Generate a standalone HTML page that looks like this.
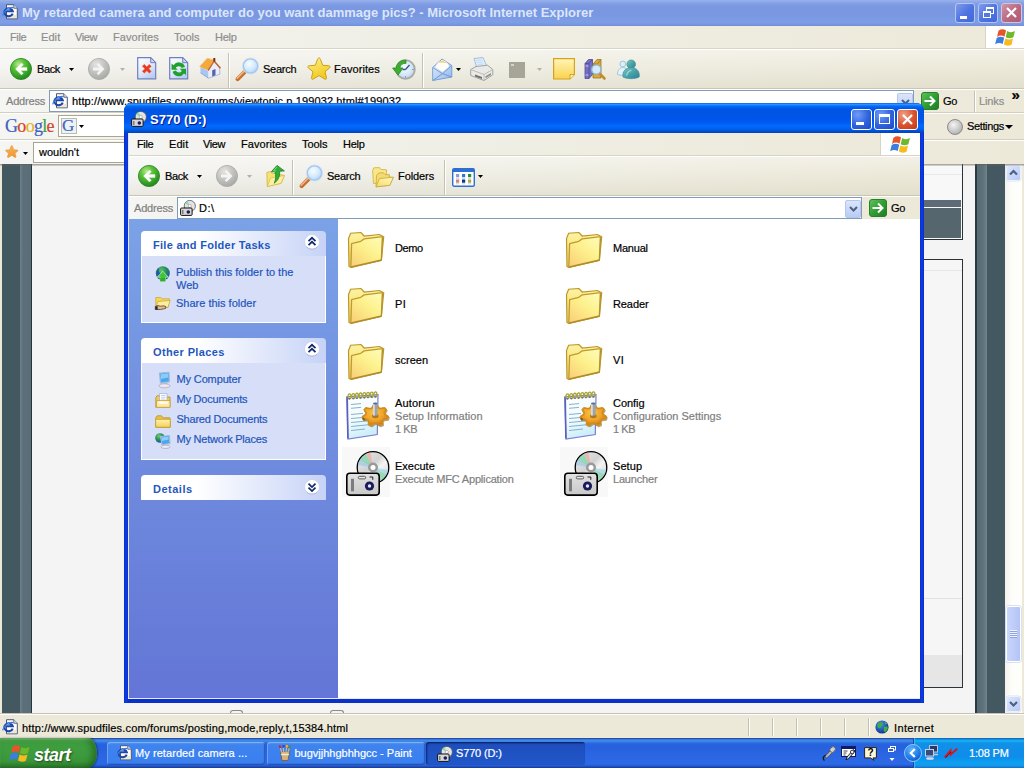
<!DOCTYPE html>
<html lang="en">
<head>
<meta charset="utf-8">
<title>S770 (D:)</title>
<style>
*{box-sizing:border-box;margin:0;padding:0}
html,body{width:1024px;height:768px;overflow:hidden;background:#ece9d8}
body{position:relative;font-family:"Liberation Sans","DejaVu Sans",sans-serif;font-size:11px;color:#000;line-height:13px}
.a{position:absolute}
.t{position:absolute;white-space:nowrap;line-height:13px;height:13px;-webkit-text-stroke:.2px currentColor}
svg{position:absolute;display:block;overflow:visible}
/* ---------- IE (inactive, maximised) ---------- */
#ie-title{left:0;top:0;width:1024px;height:26px;background:linear-gradient(to bottom,#98b2ec 0,#90abe9 6%,#7f9ce4 16%,#7a97e1 30%,#7a97e1 60%,#7d9fe6 82%,#7b99e2 92%,#728cd8 100%)}
#ie-title .cap{left:22px;top:5px;font-weight:bold;font-size:13px;line-height:16px;height:16px;color:#dbe6fb;letter-spacing:0}
.cbtn{position:absolute;width:21px;height:21px;border:1px solid #fff;border-radius:3px}
#ie-menu{left:0;top:26px;width:1024px;height:23px;background:linear-gradient(to right,#f5f5f3 0,#f2f1ec 15%,#f0efe6 38%,#eeecdf 70%,#ece9d9 100%);border-bottom:1px solid #d8d5c4}
#ie-menu .t{top:5px;color:#8d8d8d}
#ie-tb{left:0;top:49px;width:1024px;height:40px;background:linear-gradient(to bottom,rgba(255,255,255,.35) 0,rgba(255,255,255,0) 45%,rgba(190,184,158,.2) 100%),linear-gradient(to right,#f5f5f3 0,#f2f1ec 15%,#f0efe6 38%,#eeecdf 70%,#ece9d9 100%);border-top:1px solid #fff;border-bottom:1px solid #c9c6b6}
#ie-addr{left:0;top:89px;width:1024px;height:24px;background:linear-gradient(to right,#f5f5f3 0,#f2f1ec 15%,#f0efe6 38%,#eeecdf 70%,#ece9d9 100%);border-top:1px solid #fff;border-bottom:1px solid #d2cfbe}
#ie-goog{left:0;top:113px;width:1024px;height:27px;background:linear-gradient(to right,#f5f5f3 0,#f2f1ec 15%,#f0efe6 38%,#eeecdf 70%,#ece9d9 100%);border-top:1px solid #fff;border-bottom:1px solid #d2cfbe}
#ie-fav{left:0;top:140px;width:1024px;height:24px;background:linear-gradient(to right,#f5f5f3 0,#f2f1ec 15%,#f0efe6 38%,#eeecdf 70%,#ece9d9 100%);border-top:1px solid #fff}
.inp{position:absolute;background:#fff;border:1px solid #7f9db9}
.sep{position:absolute;width:2px;border-left:1px solid #c5c2b2;border-right:1px solid #fff}
/* ---------- page ---------- */
#page{left:0;top:164px;width:1024px;height:550px;background:#f4f4f4;z-index:0}
#page::before{content:'';position:absolute;left:0;top:0;width:1024px;height:2px;background:linear-gradient(to bottom,rgba(90,88,76,.6),rgba(120,116,100,.2));z-index:5}
/* ---------- status ---------- */
#ie-status{left:0;top:714px;width:1024px;height:24px;background:#ece9d8;border-top:1px solid #fff}
/* ---------- taskbar ---------- */
#taskbar{left:0;top:738px;width:1024px;height:30px;background:linear-gradient(to bottom,#1f2f86 0,#3165c4 3%,#3682e5 6%,#4490e6 10%,#3883e5 12%,#2f76e4 15%,#2a69e0 18%,#2863de 20%,#2861dd 23%,#2861de 38%,#2b66e2 54%,#2c69e5 86%,#2a65e0 89%,#255cd6 92%,#1f50c2 95%,#1941a5 98%)}
#start{left:0;top:0;width:97px;height:30px;border-radius:0 9px 9px 0/0 15px 15px 0;background:linear-gradient(to bottom,#6cba6a 0,#4aa64a 7%,#3f9f3f 18%,#3d9b3d 50%,#3b963b 78%,#318531 92%,#2a742a 100%);box-shadow:inset -4px 0 7px rgba(20,80,20,.6), inset 0 2px 2px rgba(255,255,255,.2), 1px 0 2px rgba(0,0,40,.45)}
#start .t{left:34px;top:6px;font-size:18px;line-height:22px;height:22px;font-weight:bold;font-style:italic;color:#fff;text-shadow:1px 1px 2px rgba(0,0,0,.5);letter-spacing:-0.5px}
.task{position:absolute;top:4px;height:23px;border-radius:3px;background:linear-gradient(to bottom,#5c9af3 0,#3f83ee 12%,#3c81f0 50%,#3b80ef 88%,#336fd8 100%);box-shadow:inset 1px 1px 0 rgba(255,255,255,.25), inset -1px -1px 1px rgba(0,0,60,.3)}
.task.on{background:linear-gradient(to bottom,#17399f 0,#1e4ebc 10%,#1f52c3 50%,#2157c9 100%);box-shadow:inset 1px 1px 2px rgba(0,0,40,.55)}
.task .t{top:5px;color:#fff}
#tray{left:913px;top:0;width:111px;height:30px;background:linear-gradient(to bottom,#0c59b9 1%,#139ee9 6%,#18b5f2 10%,#139beb 14%,#1290e8 19%,#0d8dea 63%,#0d9ff1 81%,#0f9eed 88%,#119be9 91%,#1392e2 94%,#137ed7 97%,#095bc9 100%);border-left:1px solid #0d4fa8;box-shadow:inset 1px 0 1px #3fb6f5}
/* ---------- Explorer window (active) ---------- */
#ex{z-index:10;left:124px;top:103px;width:800px;height:600px;border-radius:8px 8px 0 0;background:linear-gradient(to right,#0a2acb 0,#0c3ee4 2px,#0a36da 3px,#0a30cc 4px,#0a30cc 796px,#0a36da 797px,#0c3ee4 798px,#0a2acb 800px)}
#ex-title{left:0;top:0;width:800px;height:30px;border-radius:8px 8px 0 0;background:linear-gradient(to bottom,#0058ee 0,#3593ff 4%,#288eff 6%,#127dff 8%,#036ffc 10%,#0262ee 14%,#0057e5 20%,#0054e3 24%,#0055eb 56%,#005bf5 66%,#026afe 76%,#0062ef 86%,#0055dc 92%,#0049c8 96%,#0a41b8 100%)}
#ex-title .cap{left:26px;top:9px;font-weight:bold;font-size:13px;line-height:16px;height:16px;color:#fff;text-shadow:1px 1px 0 #0a1883}
#ex-in{left:4px;top:30px;width:792px;height:566px;background:#fff;overflow:hidden}
#ex-menu{left:0;top:0;width:792px;height:23px;background:linear-gradient(to right,#f5f5f3 0,#f2f1ec 15%,#f0efe6 38%,#eeecdf 70%,#ece9d9 100%);border-bottom:1px solid #d8d5c4}
#ex-menu .t{top:5px}
#ex-tb{left:0;top:23px;width:792px;height:40px;background:linear-gradient(to bottom,rgba(255,255,255,.35) 0,rgba(255,255,255,0) 45%,rgba(190,184,158,.2) 100%),linear-gradient(to right,#f5f5f3 0,#f2f1ec 15%,#f0efe6 38%,#eeecdf 70%,#ece9d9 100%);border-top:1px solid #fff;border-bottom:1px solid #c9c6b6}
#ex-addr{left:0;top:63px;width:792px;height:23px;background:linear-gradient(to right,#f5f5f3 0,#f2f1ec 15%,#f0efe6 38%,#eeecdf 70%,#ece9d9 100%);border-top:1px solid #fff}
#side{left:0;top:86px;width:210px;height:480px;background:linear-gradient(to bottom,#7ba2e7 0,#6375d6 100%)}
.ph{position:absolute;left:13px;width:185px;height:25px;border-radius:4px 4px 0 0;background:linear-gradient(to right,#fff 0,#fff 30%,#c6d3f7 100%)}
.ph .t{left:12px;top:7.500px;font-weight:bold;color:#1f57c0}
.pb{position:absolute;left:13px;width:185px;background:#d6dff7;border:1px solid #fff;border-top:0}
.pb .t{color:#1f55bd}
#files{left:210px;top:86px;width:582px;height:480px;background:#fff}
#files .t.g{color:#808080}

.cap,.ph .t,#start .t{-webkit-text-stroke:0 transparent !important}

</style>
</head>
<body>

<!-- ie_top -->
<div id="ie-title" class="a">
  <svg style="left:2px;top:4px" width="16" height="16" viewBox="0 0 16 16"><path d="M4.500 .7h7.300l3.500 3.500v10.600H4.500z" fill="#fcfcf8" stroke="#4b5876" stroke-width="1"/>
<path d="M11.800 .7v3.500h3.500" fill="#e4e9f4" stroke="#4b5876" stroke-width=".9"/>
<path d="M5 11h9.800v3.300H5z" fill="#ecdfc4" opacity=".75"/>
<path d="M10.700 9.600A4.300 3.900 0 1 1 10.800 7.300H3.200" fill="none" stroke="#1d46ac" stroke-width="2.100"/>
<path d="M.7 11.300C1.800 6.500 7.500 3 11.300 3.600" fill="none" stroke="#3d7be0" stroke-width="1.300"/>
<path d="M4.300 6.300C5 5.200 6 4.800 7 4.800" fill="none" stroke="#7db4f4" stroke-width=".9"/></svg>
  <div class="t cap">My retarded camera and computer do you want dammage pics? - Microsoft Internet Explorer</div>
  <div class="cbtn" style="left:955px;top:3px;width:20px;height:20px;border-color:#b4c6f4;background:linear-gradient(135deg,#7f9bea,#4d72e2 55%,#4468d8)"><div class="a" style="left:4px;top:12px;width:7px;height:3px;background:#fff"></div></div>
  <div class="cbtn" style="left:978px;top:3px;width:20px;height:20px;border-color:#b4c6f4;background:linear-gradient(135deg,#7f9bea,#4d72e2 55%,#4468d8)">
    <div class="a" style="left:7px;top:3px;width:8px;height:7px;border:1px solid #fff;border-top-width:2px"></div>
    <div class="a" style="left:4px;top:7px;width:8px;height:7px;border:1px solid #fff;border-top-width:2px;background:#5577e0"></div>
  </div>
  <div class="cbtn" style="left:1001px;top:3px;width:21px;height:20px;border-color:#dcc3d4;background:linear-gradient(135deg,#cf94a8,#b8687f 55%,#ab5c78)">
    <svg style="left:4px;top:3px" width="11" height="11" viewBox="0 0 11 11"><path d="M1 1l9 9M10 1l-9 9" stroke="#fff" stroke-width="2.200"/></svg>
  </div>
</div>
<div id="ie-menu" class="a">
  <div class="t" style="left:10px;letter-spacing:-0.345px">File</div>
  <div class="t" style="left:41px;letter-spacing:0.077px">Edit</div>
  <div class="t" style="left:75px;letter-spacing:-0.385px">View</div>
  <div class="t" style="left:113px;letter-spacing:0.056px">Favorites</div>
  <div class="t" style="left:174px;letter-spacing:-0.072px">Tools</div>
  <div class="t" style="left:215px;letter-spacing:-0.275px">Help</div>
  <div class="a" style="left:985px;top:0;width:39px;height:22px;background:#fff;border-left:1px solid #d8d5c4"></div>
  <svg style="left:995.5px;top:1px" width="19.5" height="19" viewBox="0 0 17.5 16.5" preserveAspectRatio="none"><path d="M2.2 3.2C4.6 1.6 7 1.8 9 3L7.6 8.4C5.6 7.2 3.4 7 .9 8.6z" fill="#e8542a"/>
<path d="M10 3.4c2 1.2 4.4 1.6 7 .1l-1.4 5.4c-2.6 1.4-4.8 1-6.9-.1z" fill="#6cb82e"/>
<path d="M.6 9.6C3 8 5.300 8.300 7.400 9.400L6 14.800c-2-1.200-4.300-1.400-6.800.2z" fill="#3d7de0"/>
<path d="M8.400 9.900c2 1.100 4.300 1.500 6.900.1l-1.400 5.400c-2.600 1.400-4.800 1-6.900-.1z" fill="#f6bb1f"/></svg>
</div>
<div id="ie-tb" class="a">
  <svg style="left:10px;top:8px" width="22" height="22" viewBox="0 0 22 22"><defs><radialGradient id="g1" cx=".38" cy=".28" r=".8"><stop offset="0" stop-color="#b6ea8a"/><stop offset=".35" stop-color="#5cc33a"/><stop offset=".75" stop-color="#2f9a24"/><stop offset="1" stop-color="#1f7d1c"/></radialGradient></defs>
<circle cx="11" cy="11" r="10.6" fill="url(#g1)" stroke="#2b7f25" stroke-width=".8"/>
<path d="M11.500 5 5.500 11l6 6 1.800-1.800L10.600 12.400H17V9.600H10.600l2.700-2.800z" fill="#fff" stroke="#e8f6e0" stroke-width=".4"/></svg>
  <div class="t" style="left:37px;top:13px;letter-spacing:-0.400px">Back</div>
  <svg style="left:69px;top:18px" width="5" height="3" viewBox="0 0 5 3"><path d="M0 0h5L2.500 3z" fill="#000"/></svg>
  <svg style="left:88px;top:8px" width="22" height="22" viewBox="0 0 22 22"><defs><radialGradient id="g2" cx=".38" cy=".28" r=".8"><stop offset="0" stop-color="#e4e4e2"/><stop offset=".5" stop-color="#c2c2c0"/><stop offset="1" stop-color="#a3a3a1"/></radialGradient></defs>
<circle cx="11" cy="11" r="10.600" fill="url(#g2)" stroke="#a9a9a6" stroke-width=".8"/>
<path d="M10.500 5l6 6-6 6-1.800-1.800 2.700-2.800H5V9.600h6.400L8.700 6.800z" fill="#f4f4f2"/></svg>
  <svg style="left:120px;top:18px" width="5" height="3" viewBox="0 0 5 3"><path d="M0 0h5L2.500 3z" fill="#b5b2a4"/></svg>
  <svg style="left:137px;top:7px" width="19.5" height="22.5" viewBox="0 0 19.5 22.5"><defs><linearGradient id="g3" x1="0" y1="0" x2=".6" y2="1"><stop offset="0" stop-color="#fdfeff"/><stop offset=".55" stop-color="#e4ecfb"/><stop offset="1" stop-color="#b9cdf3"/></linearGradient></defs>
<path d="M.7.7h13l5 5v16.100H.7z" fill="url(#g3)" stroke="#6f7fc0" stroke-width="1.2"/>
<path d="M13.700.7v5h5z" fill="#c9d6f4" stroke="#6f7fc0" stroke-width="1"/><path d="M5.300 9.300l2-2 2.500 2.500 2.500-2.500 2 2-2.500 2.500 2.500 2.500-2 2-2.500-2.500-2.500 2.500-2-2 2.500-2.500z" fill="#e8391c" stroke="#f07050" stroke-width=".5"/></svg>
  <svg style="left:169px;top:7px" width="19.5" height="22.5" viewBox="0 0 19.5 22.5"><defs><linearGradient id="g4" x1="0" y1="0" x2=".6" y2="1"><stop offset="0" stop-color="#fdfeff"/><stop offset=".55" stop-color="#e4ecfb"/><stop offset="1" stop-color="#b9cdf3"/></linearGradient></defs>
<path d="M.7.7h13l5 5v16.100H.7z" fill="url(#g4)" stroke="#6f7fc0" stroke-width="1.2"/>
<path d="M13.700.7v5h5z" fill="#c9d6f4" stroke="#6f7fc0" stroke-width="1"/><g transform="translate(9.800 12.300) scale(1.250) translate(-9.800 -11.600)"><path d="M14.800 9.600A5.200 5.200 0 0 0 5.600 8.300L4 7v5h5L7.300 10.300A3 3 0 0 1 12.300 10.600z" fill="#1fa12b"/>
<path d="M4.800 13.600A5.200 5.200 0 0 0 14 14.900l1.600 1.300v-5h-5l1.700 1.700A3 3 0 0 1 7.300 12.600z" fill="#1fa12b"/></g></svg>
  <svg style="left:199px;top:7px" width="22.5" height="22.5" viewBox="0 0 22.5 22.5"><path d="M1 9.500 8.500 1.500 15 3.500 21.500 11 21 17.500 9.500 21.800 1 15z" fill="#fff" opacity=".0"/>
<path d="M1.500 9.800v6l8 5.400v-7z" fill="#a9c6f2"/>
<path d="M9.500 21.200l11.300-4V10l-5.600-6-5.700 9z" fill="#e9eefb"/>
<path d="M9.500 21.200l11.300-4V10" fill="none" stroke="#8fa6d8" stroke-width=".7"/>
<path d="M.6 9.600 8.200 1.200l7.200 2L9.300 13.600z" fill="#f3a93c"/>
<path d="M.6 9.600 8.200 1.200l7.200 2" fill="none" stroke="#f8c977" stroke-width="1"/>
<path d="M15.200 3 22 10.800l-1.200.9-5.700-6.400-5.400 8.800-1-1z" fill="#c0623a"/>
<path d="M14.300 1h2v3.500h-2z" fill="#6b2f1c"/>
<path d="M13.200 13.200l3.300-1.200v6.300l-3.300 1.200z" fill="#5a63a8"/>
<path d="M1.500 15.800l8 5.400" stroke="#7f9bd0" stroke-width=".8"/></svg>
  <div class="sep" style="left:228px;top:3px;height:35px"></div>
  <svg style="left:235px;top:7.5px" width="24" height="23.5" viewBox="0 0 24 23.5"><defs><radialGradient id="g5" cx=".4" cy=".35" r=".7"><stop offset="0" stop-color="#f6fcff"/><stop offset=".6" stop-color="#d3eafc"/><stop offset="1" stop-color="#aad3f5"/></radialGradient></defs>
<path d="M10.300 13.200 2.600 21.100" stroke="#c4702f" stroke-width="4.200" stroke-linecap="round"/>
<path d="M9.700 12.600 2.200 20.200" stroke="#f3b683" stroke-width="1.600" stroke-linecap="round"/>
<circle cx="15.500" cy="8" r="7.300" fill="url(#g5)" stroke="#a4c6ec" stroke-width="1.600"/>
<circle cx="15.500" cy="8" r="8.100" fill="none" stroke="#cfe2f6" stroke-width=".7"/></svg>
  <div class="t" style="left:263px;top:13px;letter-spacing:-0.272px">Search</div>
  <svg style="left:307px;top:6.5px" width="24" height="24" viewBox="0 0 24 24"><defs><linearGradient id="g6" x1="0" y1="0" x2=".4" y2="1"><stop offset="0" stop-color="#fdf28a"/><stop offset="1" stop-color="#f2c81e"/></linearGradient></defs>
<path d="M12 1c1 0 1.300.8 1.700 1.900l2 5.400 5.800.4c1.500.1 2.300 1.100 1.100 2.200l-4.600 3.900 1.500 5.800c.4 1.400-.6 2.200-1.900 1.400L12 18.600 6.400 22c-1.300.8-2.300 0-1.900-1.400L6 14.800 1.400 10.900C.2 9.800 1 8.800 2.500 8.700l5.800-.4 2-5.400C10.700 1.800 11 1 12 1z" fill="url(#g6)" stroke="#c9a21a" stroke-width="1"/></svg>
  <div class="t" style="left:334px;top:13px;letter-spacing:0.056px">Favorites</div>
  <svg style="left:392px;top:8px" width="23.5" height="22" viewBox="0 0 23.5 22"><defs><radialGradient id="g7" cx=".45" cy=".4" r=".65"><stop offset="0" stop-color="#fafdff"/><stop offset=".7" stop-color="#cfe2f6"/><stop offset="1" stop-color="#9fc0e6"/></radialGradient></defs>
<circle cx="13.500" cy="11.500" r="9.300" fill="url(#g7)" stroke="#a9aaa4" stroke-width="1.800"/>
<path d="M13.500 11.500l4-4.500M13.500 11.500h-3" stroke="#2d5a8c" stroke-width="1.300"/>
<path d="M13.500 3.200v1.800M13.500 18v1.800M21.800 11.500h-1.800M7 11.500H5.200" stroke="#7d9cc2" stroke-width="1"/>
<path d="M14 2.200C9 1.600 4.600 5 4.300 10H.6L6 17.200 11 10H7.800c.4-3.300 3-5 6.200-4.600z" fill="#3fae2f" stroke="#2b8c23" stroke-width=".8"/></svg>
  <div class="sep" style="left:422px;top:3px;height:35px"></div>
  <svg style="left:432px;top:8px" width="20.5" height="23" viewBox="0 0 20.5 23"><defs><linearGradient id="g8" x1="0" y1="0" x2="1" y2="1"><stop offset="0" stop-color="#e8f2fd"/><stop offset="1" stop-color="#8fb8ec"/></linearGradient></defs>
<path d="M.7 9.500 10 1l9.800 6.500V19L.7 22.500z" fill="url(#g8)" stroke="#7a9fd6" stroke-width="1"/>
<path d="M3.800 9.500C4 5 8.500 2.400 10.500 2.400 13 2.400 16.800 5 16.900 8.700L10.500 14z" fill="#fffdf6"/>
<path d="M6.500 4.500C8 2.800 12.500 2.600 14.800 5.200 12 4.600 9 4.600 6.500 4.500z" fill="#f2c24e"/>
<path d="M.7 9.500l9.800 6.200 9.300-8.200" fill="none" stroke="#7a9fd6" stroke-width="1"/>
<path d="M.7 22.500 10.500 15.700 19.800 19" fill="none" stroke="#6f97d2" stroke-width="1"/></svg>
  <svg style="left:456px;top:18px" width="5" height="3" viewBox="0 0 5 3"><path d="M0 0h5L2.500 3z" fill="#000"/></svg>
  <svg style="left:469.5px;top:6.5px" width="23.5" height="24" viewBox="0 0 23.5 24"><path d="M4 1.500 13 .5l4 9-10 2z" fill="#dfeefc" stroke="#9ab8dc" stroke-width=".9"/>
<path d="M6 3.500l6-.6M6.800 5.500l6-.6M7.600 7.500l6-.6" stroke="#b9d2ec" stroke-width=".7"/>
<path d="M.7 12.500 6 9.500l11.500-1.300 5.300 4.300v5.300l-8.800 5.700L.7 18.500z" fill="#e9e9e6" stroke="#9a9a98" stroke-width=".9"/>
<path d="M.7 12.500 14 17.500l8.800-5" fill="none" stroke="#b5b5b2" stroke-width=".9"/>
<path d="M14 17.500v6" stroke="#b5b5b2" stroke-width=".9"/>
<path d="M5 17.500l7 2.600v2L5 19.500z" fill="#6e6e6c"/>
<path d="M15.500 19.300l5.500-3.400v2l-5.500 3.400z" fill="#8e8e8c"/></svg>
  <div class="a" style="left:509px;top:12px;width:16px;height:16px;background:#a7a597"></div>
  <div class="a" style="left:511px;top:14px;width:3px;height:2px;background:#d5d3c8"></div>
  <svg style="left:537px;top:18px" width="5" height="3" viewBox="0 0 5 3"><path d="M0 0h5L2.500 3z" fill="#b5b2a4"/></svg>
  <svg style="left:553px;top:8px" width="22" height="21.5" viewBox="0 0 22 21.5"><defs><linearGradient id="g9" x1="0" y1="0" x2="0" y2="1"><stop offset="0" stop-color="#fff6b8"/><stop offset="1" stop-color="#fbd24e"/></linearGradient></defs>
<path d="M.6.600h20.800v16l-4.400 4.400H.6z" fill="url(#g9)" stroke="#d6a21e" stroke-width="1.200"/>
<path d="M21.400 16.600h-4.400V21" fill="#fff3b0" stroke="#d6a21e" stroke-width="1"/></svg>
  <svg style="left:584px;top:8px" width="22" height="21.5" viewBox="0 0 22 21.5"><path d="M1 5.500 4.500 1.500h4v15L5 20.500H1z" fill="#7471c4" stroke="#4c4a96" stroke-width=".8"/>
<path d="M1 5.500h4l3.500-4M5 5.500v15" fill="none" stroke="#4c4a96" stroke-width=".8"/>
<path d="M1.500 8h3M1.500 17h3" stroke="#c9c7ee" stroke-width="1"/>
<path d="M9 6 13 1.500h4V20h-8z" fill="#d9a93c" stroke="#9d7620" stroke-width=".8"/>
<path d="M9 6h4.500L17 1.500" fill="none" stroke="#9d7620" stroke-width=".8"/>
<path d="M15.500 15.500 20.500 20.500" stroke="#c58a2a" stroke-width="2.600" stroke-linecap="round"/>
<circle cx="12.300" cy="11.500" r="4.600" fill="#d5ebfb" stroke="#8fb3d8" stroke-width="1.400"/></svg>
  <svg style="left:616px;top:9px" width="24" height="20" viewBox="0 0 24 20"><defs><linearGradient id="g10" x1="0" y1="0" x2="1" y2="1"><stop offset="0" stop-color="#7cc8c0"/><stop offset=".5" stop-color="#4aa3a8"/><stop offset="1" stop-color="#2b7f98"/></linearGradient></defs>
<circle cx="6.800" cy="5" r="2.900" fill="#d9eef8" stroke="#8cbcd8" stroke-width=".8"/>
<path d="M1.500 15.500C1.500 11.500 3.500 8.600 6.800 8.600 10 8.600 11.800 11 12 15c-3 1.500-7.500 1.800-10.500.5z" fill="#e4f3fa" stroke="#8cbcd8" stroke-width=".8"/>
<circle cx="15.200" cy="5.300" r="4.300" fill="url(#g10)" stroke="#3f8f9c" stroke-width=".7"/>
<path d="M7 18c-1-6 3-9.300 8.200-9.300S24 12 23.200 18c-4 2.200-12.200 2.200-16.200 0z" fill="url(#g10)" stroke="#3f8f9c" stroke-width=".7"/>
<path d="M10.500 16.500c1-3 3-5 5-5" stroke="#a4dcd8" stroke-width="1.200" fill="none"/></svg>
</div>
<div id="ie-addr" class="a">
  <div class="t" style="left:6px;top:5px;color:#7f7f7f;letter-spacing:-0.193px">Address</div>
  <div class="inp" style="left:49px;top:0;width:865px;height:22px"></div>
  <svg style="left:52px;top:3px" width="16" height="16" viewBox="0 0 16 16"><path d="M4.500 .7h7.300l3.500 3.500v10.600H4.500z" fill="#fcfcf8" stroke="#4b5876" stroke-width="1"/>
<path d="M11.800 .7v3.500h3.500" fill="#e4e9f4" stroke="#4b5876" stroke-width=".9"/>
<path d="M5 11h9.800v3.300H5z" fill="#ecdfc4" opacity=".75"/>
<path d="M10.700 9.600A4.300 3.900 0 1 1 10.800 7.300H3.200" fill="none" stroke="#1d46ac" stroke-width="2.100"/>
<path d="M.7 11.300C1.800 6.500 7.500 3 11.300 3.600" fill="none" stroke="#3d7be0" stroke-width="1.300"/>
<path d="M4.300 6.300C5 5.200 6 4.800 7 4.800" fill="none" stroke="#7db4f4" stroke-width=".9"/></svg>
  <div class="t" style="left:72px;top:5px;letter-spacing:0.124px">http://www.spudfiles.com/forums/viewtopic,p,199032.html#199032</div>
  <div class="a" style="left:897px;top:3px;width:16px;height:18px;background:linear-gradient(to bottom,#dbe5fb,#b9cbf5);border:1px solid #b4c6ee;border-radius:2px"></div>
  <svg style="left:901px;top:9px" width="9" height="6" viewBox="0 0 9 6"><path d="M1 1l3.500 3.500L8 1" fill="none" stroke="#4d6185" stroke-width="2"/></svg>
  <svg style="left:921px;top:2px" width="18" height="18" viewBox="0 0 18 18"><defs><linearGradient id="g11" x1="0" y1="0" x2="1" y2="1"><stop offset="0" stop-color="#5fc45a"/><stop offset=".5" stop-color="#2f9f34"/><stop offset="1" stop-color="#1c7c24"/></linearGradient></defs>
<rect x=".5" y=".5" width="17" height="17" rx="2.500" fill="url(#g11)" stroke="#2b7f2b" stroke-width="1"/>
<path d="M3.500 9h9.500M9 4.500 13.500 9 9 13.500" fill="none" stroke="#fff" stroke-width="2"/></svg>
  <div class="t" style="left:943px;top:5px;letter-spacing:-0.188px">Go</div>
  <div class="sep" style="left:974px;top:1px;height:21px"></div>
  <div class="t" style="left:979px;top:5px;color:#8d8d8d;letter-spacing:-0.122px">Links</div>
  <div class="t" style="left:1011.500px;top:-2px;font-weight:bold;font-size:15px">»</div>
</div>
<div id="ie-goog" class="a">
  <div class="t" style="left:5px;top:1.500px;font-family:'Liberation Serif','DejaVu Serif',serif;font-size:18px;line-height:21px;height:21px;letter-spacing:-0.7px"><span style="color:#3a62c6">G</span><span style="color:#d8402c">o</span><span style="color:#e6b320">o</span><span style="color:#3a62c6">g</span><span style="color:#3da046">l</span><span style="color:#d8402c">e</span></div>
  <div class="inp" style="left:58px;top:1px;width:80px;height:22px;border-color:#a9a690"></div>
  <div class="a" style="left:61px;top:4px;width:16px;height:16px;background:#eef1f8;border:1px solid #b9bdb0"></div>
  <div class="t" style="left:62px;top:3px;font-family:'Liberation Serif','DejaVu Serif',serif;font-size:17px;line-height:18px;height:18px;color:#3f66b4">G</div>
  <svg style="left:79px;top:11px" width="5" height="3" viewBox="0 0 5 3"><path d="M0 0h5L2.500 3z" fill="#000"/></svg>
  <div class="a" style="left:947px;top:5px;width:16px;height:16px;border-radius:8px;background:radial-gradient(circle at 40% 35%,#f4f4f4,#b9b9b9 70%,#8f8f8f);border:1px solid #8a8a8a"></div>
  <div class="t" style="left:967px;top:6px;letter-spacing:-0.364px">Settings</div>
  <svg style="left:1005px;top:11px" width="8" height="4" viewBox="0 0 8 4"><path d="M0 0h8L4 4z" fill="#000"/></svg>
</div>
<div id="ie-fav" class="a">
  <svg style="left:5px;top:4px" width="13.5" height="13.5" viewBox="0 0 24 24"><defs><linearGradient id="g12" x1="0" y1="0" x2=".4" y2="1"><stop offset="0" stop-color="#f9b45a"/><stop offset="1" stop-color="#ee9a3a"/></linearGradient></defs>
<path d="M12 1c1 0 1.300.8 1.700 1.900l2 5.400 5.800.4c1.500.1 2.300 1.100 1.100 2.200l-4.600 3.900 1.500 5.800c.4 1.400-.6 2.200-1.900 1.400L12 18.600 6.400 22c-1.300.8-2.300 0-1.900-1.400L6 14.800 1.400 10.900C.2 9.800 1 8.800 2.500 8.700l5.800-.4 2-5.400C10.700 1.800 11 1 12 1z" fill="url(#g12)" stroke="#e79a3c" stroke-width="1"/></svg>
  <svg style="left:23px;top:11px" width="5" height="3" viewBox="0 0 5 3"><path d="M0 0h5L2.500 3z" fill="#000"/></svg>
  <div class="inp" style="left:33px;top:1px;width:120px;height:21px;border-color:#a9a690"></div>
  <div class="t" style="left:39px;top:5px">wouldn't</div>
</div>

<!-- ie_page -->
<div id="page" class="a">
  <!-- left dark columns -->
  <div class="a" style="left:0;top:0;width:2px;height:550px;background:#ece9d8"></div>
  <div class="a" style="left:2px;top:0;width:18px;height:549px;background:#445862"></div>
  <div class="a" style="left:20px;top:0;width:11px;height:549px;background:linear-gradient(to right,#6d818b,#5a6f79 30%,#5a6e78)"></div>
  <div class="a" style="left:31px;top:0;width:1px;height:549px;background:#27343b"></div>
  <!-- right tables -->
  <div class="a" style="left:900px;top:0;width:63px;height:76px;background:#f8f8f8;border:1px solid #2b3338;border-top:0"></div>
  <div class="a" style="left:900px;top:10px;width:62px;height:1px;background:#e9e9e9"></div>
  <div class="a" style="left:900px;top:36px;width:61px;height:7px;background:#5b6c76"></div>
  <div class="a" style="left:900px;top:44px;width:61px;height:30px;background:#56666f"></div>
  <div class="a" style="left:900px;top:95px;width:63px;height:429px;background:#f6f6f6;border:1px solid #2b3338"></div>
  <div class="a" style="left:900px;top:106px;width:62px;height:1px;background:#e6e6e6"></div>
  <div class="a" style="left:900px;top:434px;width:62px;height:1px;background:#e2e2e2"></div>
  <div class="a" style="left:900px;top:491px;width:62px;height:32px;background:#e6e6e6"></div>
  <!-- right dark columns -->
  <div class="a" style="left:975px;top:0;width:2px;height:549px;background:#2b3a42"></div>
  <div class="a" style="left:977px;top:0;width:10px;height:549px;background:linear-gradient(to right,#586c76,#5d717b 60%,#6f848e)"></div>
  <div class="a" style="left:987px;top:0;width:18px;height:549px;background:#445862"></div>
  <!-- scrollbar -->
  <div class="a" style="left:1005px;top:0;width:17px;height:549px;background:linear-gradient(to right,#f3f1ec,#fdfdfa 40%,#fefefb)"></div>
  <svg style="left:1006px;top:1px" width="15" height="16" viewBox="0 0 15 16"><defs><linearGradient id="g13" x1="0" y1="0" x2="1" y2="1"><stop offset="0" stop-color="#dfe8fd"/><stop offset="1" stop-color="#b7c9f5"/></linearGradient></defs>
<rect x=".5" y=".5" width="14" height="15" rx="2" fill="url(#g13)" stroke="#fff" stroke-width="1"/>
<rect x="0" y="0" width="15" height="16" rx="2.500" fill="none" stroke="#c4d1f2" stroke-width=".6"/>
<path d="M4 9.500 7.500 6 11 9.500" fill="none" stroke="#4d6185" stroke-width="2.200"/></svg>
  <svg style="left:1006px;top:532px" width="15" height="16" viewBox="0 0 15 16"><defs><linearGradient id="g14" x1="0" y1="0" x2="1" y2="1"><stop offset="0" stop-color="#dfe8fd"/><stop offset="1" stop-color="#b7c9f5"/></linearGradient></defs>
<rect x=".5" y=".5" width="14" height="15" rx="2" fill="url(#g14)" stroke="#fff" stroke-width="1"/>
<rect x="0" y="0" width="15" height="16" rx="2.500" fill="none" stroke="#c4d1f2" stroke-width=".6"/>
<path d="M4 6 7.500 9.500 11 6" fill="none" stroke="#4d6185" stroke-width="2.200"/></svg>
  <div class="a" style="left:1006px;top:442px;width:15px;height:56px;border-radius:2px;background:linear-gradient(to right,#c9d6fb,#bccbf8 60%,#b3c3f3);border:1px solid #fff;box-shadow:0 0 0 .5px #b4c4ec"></div>
  <div class="a" style="left:1010px;top:466px;width:7px;height:1px;background:#eef3ff;box-shadow:0 2px 0 #eef3ff,0 4px 0 #eef3ff,0 6px 0 #eef3ff,0 1px 0 #8ea3dc,0 3px 0 #8ea3dc,0 5px 0 #8ea3dc,0 7px 0 #8ea3dc"></div>
  <div class="a" style="left:1022px;top:0;width:2px;height:550px;background:#ece9d8"></div>
  <!-- small partial controls at bottom -->
  <div class="a" style="left:230px;top:546px;width:13px;height:6px;border:1px solid #8a8a8a;border-bottom:0;border-radius:3px 3px 0 0"></div>
  <div class="a" style="left:330px;top:546px;width:14px;height:6px;border:1px solid #8a8a8a;border-bottom:0;border-radius:3px 3px 0 0"></div>
  <div class="a" style="left:0;top:549px;width:1024px;height:1px;background:#fff"></div>
</div>

<!-- ie_status -->
<div class="a" style="left:0;top:713px;width:1024px;height:1px;background:#c5c2b2"></div>
<div id="ie-status" class="a">
  <svg style="left:2px;top:4px" width="16" height="16" viewBox="0 0 16 16"><path d="M4.500 .7h7.300l3.500 3.500v10.600H4.500z" fill="#fcfcf8" stroke="#4b5876" stroke-width="1"/>
<path d="M11.800 .7v3.500h3.500" fill="#e4e9f4" stroke="#4b5876" stroke-width=".9"/>
<path d="M5 11h9.800v3.300H5z" fill="#ecdfc4" opacity=".75"/>
<path d="M10.700 9.600A4.300 3.900 0 1 1 10.800 7.300H3.200" fill="none" stroke="#1d46ac" stroke-width="2.100"/>
<path d="M.7 11.300C1.800 6.500 7.500 3 11.300 3.600" fill="none" stroke="#3d7be0" stroke-width="1.300"/>
<path d="M4.300 6.300C5 5.200 6 4.800 7 4.800" fill="none" stroke="#7db4f4" stroke-width=".9"/></svg>
  <div class="t" style="left:22px;top:7px;letter-spacing:0.153px">http://www.spudfiles.com/forums/posting,mode,reply,t,15384.html</div>
  <div class="sep" style="left:748px;top:3px;height:18px"></div>
  <div class="sep" style="left:772px;top:3px;height:18px"></div>
  <div class="sep" style="left:796px;top:3px;height:18px"></div>
  <div class="sep" style="left:820px;top:3px;height:18px"></div>
  <div class="sep" style="left:844px;top:3px;height:18px"></div>
  <div class="sep" style="left:868px;top:3px;height:18px"></div>
  <svg style="left:875px;top:5px" width="14" height="14" viewBox="0 0 14 14"><defs><radialGradient id="g15" cx=".4" cy=".3" r=".8"><stop offset="0" stop-color="#4f8fe8"/><stop offset=".6" stop-color="#1c4fb8"/><stop offset="1" stop-color="#0c2a78"/></radialGradient></defs>
<circle cx="7" cy="7" r="6.600" fill="url(#g15)"/>
<path d="M3 3.500C5 1.500 7.500 2 8 3.500 8.500 5 6.500 5.500 6 7 5.500 8.500 4 8.500 3 7.500 2 6.500 2 4.500 3 3.500z" fill="#3fae3a"/>
<path d="M9 7c1.500-1 3.500-.5 3.800.5.300 1.500-1 3.500-2.500 4.500C9.300 12.500 8.500 11 8.800 9.800 9 9 8.300 7.600 9 7z" fill="#3fae3a"/>
<path d="M9.500 2.200c1 .1 2 .8 2.500 1.600l-1.500.5z" fill="#5fc85a"/></svg>
  <div class="t" style="left:894px;top:7px;letter-spacing:0.370px">Internet</div>
</div>

<!-- taskbar -->
<div id="taskbar" class="a">
  <div id="start" class="a">
    <svg style="left:10px;top:5px" width="20" height="19" viewBox="0 0 17.5 16.5" preserveAspectRatio="none"><path d="M2.2 3.2C4.6 1.6 7 1.8 9 3L7.6 8.4C5.6 7.2 3.4 7 .9 8.6z" fill="#e8542a"/>
<path d="M10 3.4c2 1.2 4.4 1.6 7 .1l-1.4 5.4c-2.6 1.4-4.8 1-6.9-.1z" fill="#6cb82e"/>
<path d="M.6 9.6C3 8 5.300 8.300 7.400 9.400L6 14.800c-2-1.200-4.300-1.400-6.800.2z" fill="#3d7de0"/>
<path d="M8.400 9.900c2 1.100 4.300 1.500 6.900.1l-1.400 5.400c-2.600 1.400-4.800 1-6.900-.1z" fill="#f6bb1f"/></svg>
    <div class="t">start</div>
  </div>
  <div class="task" style="left:107px;width:158px"><svg style="left:9px;top:3px" width="16" height="16" viewBox="0 0 16 16"><path d="M4.500 .7h7.300l3.500 3.500v10.600H4.500z" fill="#fcfcf8" stroke="#4b5876" stroke-width="1"/>
<path d="M11.800 .7v3.500h3.500" fill="#e4e9f4" stroke="#4b5876" stroke-width=".9"/>
<path d="M5 11h9.800v3.300H5z" fill="#ecdfc4" opacity=".75"/>
<path d="M10.700 9.600A4.300 3.900 0 1 1 10.800 7.300H3.200" fill="none" stroke="#1d46ac" stroke-width="2.100"/>
<path d="M.7 11.300C1.800 6.500 7.500 3 11.300 3.600" fill="none" stroke="#3d7be0" stroke-width="1.300"/>
<path d="M4.300 6.300C5 5.200 6 4.800 7 4.800" fill="none" stroke="#7db4f4" stroke-width=".9"/></svg><div class="t" style="left:28px;letter-spacing:0.074px">My retarded camera ...</div></div>
  <div class="task" style="left:266.500px;width:158px"><svg style="left:10px;top:3px" width="16" height="16" viewBox="0 0 16 16"><path d="M3.500 6.500h9l-1.500 9h-6z" fill="#d9b27a" stroke="#7a5a2a" stroke-width=".8"/>
<path d="M4.500 7 3 1M6.500 7 6.500 .5M9 7 10 .5M11 7 13 1.500" stroke="#b9b9b9" stroke-width="1.200"/>
<path d="M2.600.5 3.400 3M6.500 0v2.500M10.100 0 9.700 2.500M13.200 1 12.400 3.300" stroke-width="1.800" stroke="#d8161c"/>
<path d="M6.500 0v2.500" stroke="#1c4fd8" stroke-width="1.800"/><path d="M10.100 0 9.700 2.500" stroke="#e8c81c" stroke-width="1.800"/><path d="M13.200 1 12.400 3.300" stroke="#2fae2c" stroke-width="1.800"/>
<path d="M4 9.500h8" stroke="#fff" stroke-width="1.500" opacity=".7"/></svg><div class="t" style="left:28px">bugvjjhhgbhhgcc - Paint</div></div>
  <div class="task on" style="left:426px;width:159px"><svg style="left:10.5px;top:3.5px" width="16" height="16" viewBox="0 0 16 16"><circle cx="9.800" cy="6" r="5.600" fill="#e4e4e4" stroke="#555" stroke-width=".8"/>
<path d="M9.800 6 5 3.500A5.500 5.500 0 0 1 7.500 1z" fill="#8fd8b8"/>
<circle cx="9.800" cy="6" r="1.600" fill="#fff" stroke="#999" stroke-width=".6"/>
<rect x=".6" y="8" width="11.500" height="7.400" rx="1" fill="#d8d8d8" stroke="#111" stroke-width="1"/>
<rect x="2.200" y="10" width="1.200" height="4" fill="#666"/>
<circle cx="8.300" cy="12" r="1.800" fill="#1b1b5c"/></svg><div class="t" style="left:30px;letter-spacing:-0.15px">S770 (D:)</div></div>
  <svg style="left:822px;top:8px" width="14" height="15" viewBox="0 0 14 15"><path d="M2.500 14.500C1 13 .8 11.500 2 10.500L4 9" fill="none" stroke="#111" stroke-width="1.200"/>
<path d="M3 10.500 8.500 4.500 10.500 6.500 4.800 12z" fill="#b9b9b9" stroke="#444" stroke-width=".7"/>
<ellipse cx="10.700" cy="3.500" rx="3" ry="2.400" transform="rotate(-45 10.700 3.500)" fill="#e4e4e4" stroke="#555" stroke-width=".8"/>
<path d="M9 2.500l3 3M10.300 1.500l2.500 2.500" stroke="#888" stroke-width=".5"/></svg>
  <svg style="left:841px;top:8px" width="15" height="14" viewBox="0 0 15 14"><rect x=".5" y=".5" width="14" height="10" fill="#fff" stroke="#0c1a6a" stroke-width="1"/>
<rect x=".5" y=".5" width="14" height="2.500" fill="#0c1a6a"/>
<path d="M2.500 5h4M2.500 7h3M2.500 9h2" stroke="#333" stroke-width=".9"/>
<path d="M12.500 3.500 6 11 5 13.800 7.800 12.500 14 5z" fill="#d8d8d8" stroke="#111" stroke-width=".9"/>
<circle cx="11.200" cy="6" r="1.800" fill="#f4f4f4" stroke="#111" stroke-width=".8"/></svg>
  <svg style="left:864px;top:9px" width="13" height="14" viewBox="0 0 13 14"><path d="M.6.600h11.800v10.300H9l1 2.500-3.500-2.500H.6z" fill="#fdf8d8" stroke="#222" stroke-width="1"/>
<text x="6.500" y="9.300" text-anchor="middle" font-family="Liberation Sans, sans-serif" font-weight="bold" font-size="10" fill="#000">?</text></svg>
  <svg style="left:888px;top:8px" width="8" height="15" viewBox="0 0 8 15"><rect x="2.500" y=".5" width="5" height="3.500" fill="none" stroke="#fff" stroke-width="1"/>
<rect x=".5" y="2.500" width="5" height="3" fill="#2663da" stroke="#fff" stroke-width="1"/>
<path d="M1.500 12h5L4 15z" fill="#fff"/></svg>
  <div id="tray" class="a">
    <svg style="left:11px;top:7px" width="13" height="15" viewBox="0 0 13 15"><rect x="4.500" y=".5" width="8" height="6.500" fill="#2a3a6a" stroke="#b9c4d8" stroke-width="1"/>
<rect x=".5" y="4.500" width="8" height="6.500" fill="#3a4a7a" stroke="#c9d2e4" stroke-width="1"/>
<path d="M2 13.500h6M8 9.500h5" stroke="#c9c4d4" stroke-width="1.500"/>
<ellipse cx="5" cy="13.500" rx="4" ry="1.300" fill="#d9d4e4"/></svg>
    <svg style="left:30px;top:10px" width="14" height="11" viewBox="0 0 14 11"><path d="M.8 9.500 6.500 2.500 6.800 6.500 13.200 .8" fill="none" stroke="#d8161c" stroke-width="2"/>
<path d="M1.500 10 7 4" fill="none" stroke="#5a0c10" stroke-width=".8"/></svg>
    <div class="t" style="left:55px;top:9px;color:#fff;letter-spacing:-0.195px">1:08 PM</div>
  </div>
  <svg style="left:904px;top:6px" width="18" height="18" viewBox="0 0 18 18"><defs><radialGradient id="g16" cx=".4" cy=".3" r=".8"><stop offset="0" stop-color="#5fb6fb"/><stop offset=".6" stop-color="#1f7be8"/><stop offset="1" stop-color="#0c4fc0"/></radialGradient></defs>
<circle cx="9" cy="9" r="8.500" fill="url(#g16)" stroke="#8fc8fb" stroke-width="1"/>
<path d="M10.800 5 6.800 9l4 4" fill="none" stroke="#fff" stroke-width="2.200"/></svg>
</div>

<!-- explorer -->
<div id="ex" class="a">
  <div id="ex-title" class="a">
    <svg style="left:7px;top:8px" width="16" height="16" viewBox="0 0 16 16"><circle cx="9.800" cy="6" r="5.600" fill="#e4e4e4" stroke="#555" stroke-width=".8"/>
<path d="M9.800 6 5 3.500A5.500 5.500 0 0 1 7.500 1z" fill="#8fd8b8"/>
<circle cx="9.800" cy="6" r="1.600" fill="#fff" stroke="#999" stroke-width=".6"/>
<rect x=".6" y="8" width="11.500" height="7.400" rx="1" fill="#d8d8d8" stroke="#111" stroke-width="1"/>
<rect x="2.200" y="10" width="1.200" height="4" fill="#666"/>
<circle cx="8.300" cy="12" r="1.800" fill="#1b1b5c"/></svg>
    <div class="t cap">S770 (D:)</div>
    <div class="cbtn" style="left:727px;top:6px;background:radial-gradient(circle at 30% 25%,#6f9cf8,#2f62dc 55%,#1f47c4)"><div class="a" style="left:4px;top:12px;width:8px;height:3px;background:#fff"></div></div>
    <div class="cbtn" style="left:750px;top:6px;background:radial-gradient(circle at 30% 25%,#6f9cf8,#2f62dc 55%,#1f47c4)"><div class="a" style="left:4px;top:4px;width:11px;height:10px;border:1px solid #fff;border-top-width:3px"></div></div>
    <div class="cbtn" style="left:773px;top:6px;background:radial-gradient(circle at 30% 25%,#f0a088,#d9502c 55%,#c0391c)">
      <svg style="left:4px;top:4px" width="11" height="11" viewBox="0 0 11 11"><path d="M1 1l9 9M10 1l-9 9" stroke="#fff" stroke-width="2.200"/></svg>
    </div>
  </div>
  <div class="a" style="left:4px;top:30px;width:1px;height:566px;background:#dfe6fa;z-index:3"></div>
  <div class="a" style="left:4px;top:595px;width:792px;height:1px;background:#e6ebfa;z-index:3"></div>
  <div id="ex-in" class="a">
    <div id="ex-menu" class="a">
      <div class="t" style="left:9px;letter-spacing:-0.345px">File</div>
      <div class="t" style="left:41px;letter-spacing:0.077px">Edit</div>
      <div class="t" style="left:75px;letter-spacing:-0.385px">View</div>
      <div class="t" style="left:113px;letter-spacing:0.056px">Favorites</div>
      <div class="t" style="left:174px;letter-spacing:-0.072px">Tools</div>
      <div class="t" style="left:215px;letter-spacing:-0.275px">Help</div>
      <div class="a" style="left:752px;top:0;width:40px;height:22px;background:#fff;border-left:1px solid #d8d5c4"></div>
      <svg style="left:763px;top:1px" width="19.5" height="19" viewBox="0 0 17.5 16.5" preserveAspectRatio="none"><path d="M2.2 3.2C4.6 1.6 7 1.8 9 3L7.6 8.4C5.6 7.2 3.4 7 .9 8.6z" fill="#e8542a"/>
<path d="M10 3.4c2 1.2 4.4 1.6 7 .1l-1.4 5.4c-2.6 1.4-4.8 1-6.9-.1z" fill="#6cb82e"/>
<path d="M.6 9.6C3 8 5.300 8.300 7.400 9.400L6 14.800c-2-1.200-4.300-1.400-6.800.2z" fill="#3d7de0"/>
<path d="M8.400 9.900c2 1.100 4.300 1.500 6.900.1l-1.400 5.400c-2.600 1.400-4.800 1-6.900-.1z" fill="#f6bb1f"/></svg>
    </div>
    <div id="ex-tb" class="a">
      <svg style="left:9.5px;top:8px" width="22" height="22" viewBox="0 0 22 22"><defs><radialGradient id="g17" cx=".38" cy=".28" r=".8"><stop offset="0" stop-color="#b6ea8a"/><stop offset=".35" stop-color="#5cc33a"/><stop offset=".75" stop-color="#2f9a24"/><stop offset="1" stop-color="#1f7d1c"/></radialGradient></defs>
<circle cx="11" cy="11" r="10.6" fill="url(#g17)" stroke="#2b7f25" stroke-width=".8"/>
<path d="M11.500 5 5.500 11l6 6 1.800-1.800L10.600 12.400H17V9.600H10.600l2.700-2.800z" fill="#fff" stroke="#e8f6e0" stroke-width=".4"/></svg>
      <div class="t" style="left:37px;top:13px;letter-spacing:-0.400px">Back</div>
      <svg style="left:69px;top:18px" width="5" height="3" viewBox="0 0 5 3"><path d="M0 0h5L2.500 3z" fill="#000"/></svg>
      <svg style="left:88px;top:8px" width="22" height="22" viewBox="0 0 22 22"><defs><radialGradient id="g18" cx=".38" cy=".28" r=".8"><stop offset="0" stop-color="#e4e4e2"/><stop offset=".5" stop-color="#c2c2c0"/><stop offset="1" stop-color="#a3a3a1"/></radialGradient></defs>
<circle cx="11" cy="11" r="10.600" fill="url(#g18)" stroke="#a9a9a6" stroke-width=".8"/>
<path d="M10.500 5l6 6-6 6-1.800-1.800 2.700-2.800H5V9.600h6.400L8.700 6.800z" fill="#f4f4f2"/></svg>
      <svg style="left:119px;top:18px" width="5" height="3" viewBox="0 0 5 3"><path d="M0 0h5L2.500 3z" fill="#b5b2a4"/></svg>
      <svg style="left:137.5px;top:8px" width="19.5" height="22" viewBox="0 0 19.5 22"><path d="M.8 7.500 4 6.500 6 8 18.500 10.500 15 18.300 1.300 21.500z" fill="#f7e27a" stroke="#d2b23a" stroke-width=".8"/>
<path d="M1.300 21.500 4.500 13 18.500 10.500 15 18.300z" fill="#fbf0a2" stroke="#d2b23a" stroke-width=".6"/>
<path d="M11 .4 5.300 6.800 8.800 6.600C10.300 10.500 9.800 14.500 8.300 18.200 12.800 14.800 14 10.500 13.600 6.300L18.400 5.900z" fill="#2fae34" stroke="#1d7d24" stroke-width=".8"/>
<path d="M11 2 7.500 6l2.300-.1" fill="none" stroke="#8fe08a" stroke-width=".8"/></svg>
      <div class="sep" style="left:164px;top:3px;height:35px"></div>
      <svg style="left:171px;top:8px" width="24" height="23.5" viewBox="0 0 24 23.5"><defs><radialGradient id="g19" cx=".4" cy=".35" r=".7"><stop offset="0" stop-color="#f6fcff"/><stop offset=".6" stop-color="#d3eafc"/><stop offset="1" stop-color="#aad3f5"/></radialGradient></defs>
<path d="M10.300 13.200 2.600 21.100" stroke="#c4702f" stroke-width="4.200" stroke-linecap="round"/>
<path d="M9.700 12.600 2.200 20.200" stroke="#f3b683" stroke-width="1.600" stroke-linecap="round"/>
<circle cx="15.500" cy="8" r="7.300" fill="url(#g19)" stroke="#a4c6ec" stroke-width="1.600"/>
<circle cx="15.500" cy="8" r="8.100" fill="none" stroke="#cfe2f6" stroke-width=".7"/></svg>
      <div class="t" style="left:199px;top:13px;letter-spacing:-0.272px">Search</div>
      <svg style="left:244px;top:10px" width="22" height="20.5" viewBox="0 0 22 20.5"><defs><linearGradient id="g20" x1="1" y1="0" x2="0" y2="1"><stop offset="0" stop-color="#fffbc0"/><stop offset="1" stop-color="#f6d96e"/></linearGradient></defs>
<path d="M.6 3.500 1.800.800 7.500.6 9 2.500 14.500 2.800 14 15.500 1.500 16.500z" fill="#f9e88a" stroke="#cfae38" stroke-width=".8"/>
<path d="M4 19.800 4.500 8.500 6.500 6 11.500 5.800 13 7.500 17.500 7.800 17 10 21.300 10.300 17.800 18.300z" fill="#f4da70" stroke="#c9a834" stroke-width=".8"/>
<path d="M4 19.800 7.500 11.500 21.300 10.300 17.800 18.300z" fill="url(#g20)" stroke="#c9a834" stroke-width=".8"/></svg>
      <div class="t" style="left:270px;top:13px;letter-spacing:-0.081px">Folders</div>
      <div class="sep" style="left:316px;top:3px;height:35px"></div>
      <svg style="left:324px;top:10.5px" width="23" height="19" viewBox="0 0 23 19"><rect x=".7" y=".7" width="21.600" height="17.600" rx="1.500" fill="#fff" stroke="#2e6fd2" stroke-width="1.400"/>
<rect x=".7" y=".7" width="21.600" height="3.300" fill="#2e6fd2"/>
<rect x="4" y="6" width="3.200" height="3.200" fill="#8e9cc8"/><rect x="10" y="6" width="3.200" height="3.200" fill="#2f78d2"/><rect x="16" y="6" width="3.200" height="3.200" fill="#1f8f3c"/>
<rect x="4" y="11.500" width="3.200" height="3.200" fill="#d9826a"/><rect x="10" y="11.500" width="3.200" height="3.200" fill="#14317c"/><rect x="16" y="11.500" width="3.200" height="3.200" fill="#b3a83c"/>
<path d="M4 10.300h3.200M10 10.300h3.200M16 10.300h3.200M4 15.800h3.200M10 15.800h3.200M16 15.800h3.200" stroke="#9fc0ea" stroke-width=".7"/></svg>
      <svg style="left:350px;top:18px" width="5" height="3" viewBox="0 0 5 3"><path d="M0 0h5L2.500 3z" fill="#000"/></svg>
    </div>
    <div id="ex-addr" class="a">
      <div class="t" style="left:6px;top:5px;color:#7f7f7f;letter-spacing:-0.193px">Address</div>
      <div class="inp" style="left:49px;top:0;width:685px;height:22px"></div>
      <svg style="left:52px;top:3px" width="16" height="16" viewBox="0 0 16 16"><circle cx="9.800" cy="6" r="5.600" fill="#e4e4e4" stroke="#555" stroke-width=".8"/>
<path d="M9.800 6 5 3.500A5.500 5.500 0 0 1 7.500 1z" fill="#8fd8b8"/>
<circle cx="9.800" cy="6" r="1.600" fill="#fff" stroke="#999" stroke-width=".6"/>
<rect x=".6" y="8" width="11.500" height="7.400" rx="1" fill="#d8d8d8" stroke="#111" stroke-width="1"/>
<rect x="2.200" y="10" width="1.200" height="4" fill="#666"/>
<circle cx="8.300" cy="12" r="1.800" fill="#1b1b5c"/></svg>
      <div class="t" style="left:71px;top:5px;letter-spacing:0.500px">D:\</div>
      <div class="a" style="left:717px;top:3px;width:16px;height:18px;background:linear-gradient(to bottom,#dbe5fb,#b9cbf5);border:1px solid #b4c6ee;border-radius:2px"></div>
      <svg style="left:721px;top:9px" width="9" height="6" viewBox="0 0 9 6"><path d="M1 1l3.500 3.500L8 1" fill="none" stroke="#4d6185" stroke-width="2"/></svg>
      <svg style="left:741px;top:2px" width="18" height="18" viewBox="0 0 18 18"><defs><linearGradient id="g21" x1="0" y1="0" x2="1" y2="1"><stop offset="0" stop-color="#5fc45a"/><stop offset=".5" stop-color="#2f9f34"/><stop offset="1" stop-color="#1c7c24"/></linearGradient></defs>
<rect x=".5" y=".5" width="17" height="17" rx="2.500" fill="url(#g21)" stroke="#2b7f2b" stroke-width="1"/>
<path d="M3.500 9h9.500M9 4.500 13.500 9 9 13.500" fill="none" stroke="#fff" stroke-width="2"/></svg>
      <div class="t" style="left:763px;top:5px;letter-spacing:-0.188px">Go</div>
    </div>
    <div id="side" class="a">
      <div class="ph" style="top:12px"><div class="t" style="letter-spacing:0.286px">File and Folder Tasks</div><svg style="left:163px;top:3px" width="16" height="16" viewBox="0 0 16 16"><circle cx="8" cy="8" r="7.500" fill="#fff" stroke="#c9d2ea" stroke-width=".9"/>
<path d="M2.500 12.800A7.500 7.500 0 0 0 13.500 12.800" fill="none" stroke="#aab4d4" stroke-width=".9"/>
<path d="M4.500 7.200 8 3.800 11.500 7.200M4.500 11.200 8 7.800 11.500 11.200" fill="none" stroke="#11296b" stroke-width="1.700"/></svg></div>
      <div class="pb" style="top:37px;height:67px">
        <svg style="left:13px;top:10px" width="16" height="16" viewBox="0 0 16 16"><defs><radialGradient id="g22" cx=".4" cy=".3" r=".75"><stop offset="0" stop-color="#5fc46a"/><stop offset=".45" stop-color="#2a8f5a"/><stop offset="1" stop-color="#1a4fb0"/></radialGradient></defs>
<circle cx="7.800" cy="7.200" r="7" fill="url(#g22)"/>
<path d="M1.500 9.500C1 6 2 3.500 4 2 3 5 4 7 6 8z" fill="#1c55c0"/>
<path d="M7.800 5.200 2.300 11.200h2.900v4.200h5.200v-4.200h2.900z" fill="#3fc63a" stroke="#d8f6d0" stroke-width=".7"/>
<path d="M5.200 11.800v3.600h5.200v-3.600" fill="#2fae2c"/></svg>
        <div class="t" style="left:34px;top:10px">Publish this folder to the</div>
        <div class="t" style="left:34px;top:23px">Web</div>
        <svg style="left:13px;top:40px" width="16" height="14" viewBox="0 0 16 14"><path d="M.8 1.500h5l1.200 1.300h7.500L13 11.500H.8z" fill="#f3d75a" stroke="#c7a62e" stroke-width=".7"/>
<path d="M.8 11.500 3 5.500 15.200 4.500 12.800 11.500z" fill="#fbeea0" stroke="#c7a62e" stroke-width=".7"/>
<path d="M.3 10.500 3 9.500 5.500 10.200 9 9.800 11 10.800 10.500 12.500 5.500 13.500.3 13.500z" fill="#e9b98a" stroke="#3a2a1c" stroke-width=".7"/>
<path d="M.3 10.300h2.400v3.300H.3z" fill="#2a2a3a"/></svg>
        <div class="t" style="left:34px;top:41px">Share this folder</div>
      </div>
      <div class="ph" style="top:119px"><div class="t" style="letter-spacing:0.376px">Other Places</div><svg style="left:163px;top:3px" width="16" height="16" viewBox="0 0 16 16"><circle cx="8" cy="8" r="7.500" fill="#fff" stroke="#c9d2ea" stroke-width=".9"/>
<path d="M2.500 12.800A7.500 7.500 0 0 0 13.500 12.800" fill="none" stroke="#aab4d4" stroke-width=".9"/>
<path d="M4.500 7.200 8 3.800 11.500 7.200M4.500 11.200 8 7.800 11.500 11.200" fill="none" stroke="#11296b" stroke-width="1.700"/></svg></div>
      <div class="pb" style="top:144px;height:97px">
        <svg style="left:15px;top:9px" width="14" height="16" viewBox="0 0 14 16"><path d="M2.500 1.200 12 .3 12.300 9.800 3.500 11z" fill="#4aa6ee" stroke="#9bbce0" stroke-width="1.200"/>
<path d="M3.700 2.300 11 1.600 11.200 5.500 4 7z" fill="#9ad6fb" opacity=".8"/>
<path d="M6 10.800h4.500v2.200H6z" fill="#b9c4d8"/>
<ellipse cx="7.500" cy="13.800" rx="5.600" ry="2" fill="#ece7f0" stroke="#a7a2b8" stroke-width=".7"/></svg>
        <div class="t" style="left:34.500px;top:10px;letter-spacing:-0.133px">My Computer</div>
        <svg style="left:13px;top:30px" width="16" height="15" viewBox="0 0 16 15"><path d="M.8 4.500 2 2.800 5.500 2.800 6.500 4h8.500v10.300H.8z" fill="#f2c85a" stroke="#b98a2a" stroke-width=".8"/>
<path d="M4.500.6h7.500v8H4.500z" fill="#fff" stroke="#9ab0cc" stroke-width=".7"/>
<path d="M6 2.500h4.500M6 4.300h4.500M6 6.100h4.500" stroke="#a9c0dc" stroke-width=".7"/>
<path d="M1.500 14.300 1.500 7.500 15 7.500 15 14.300z" fill="#fbe9a6" stroke="#c9a03a" stroke-width=".8"/>
<path d="M3.500 8.500h9.500v2.300H3.500z" fill="#fff" opacity=".85"/></svg>
        <div class="t" style="left:34.500px;top:30px;letter-spacing:-0.214px">My Documents</div>
        <svg style="left:13px;top:52px" width="16" height="13" viewBox="0 0 16 13"><defs><linearGradient id="g23" x1="0" y1="0" x2="0" y2="1"><stop offset="0" stop-color="#fff4a8"/><stop offset="1" stop-color="#f4cf5c"/></linearGradient></defs>
<path d="M.7 3 2.200.800 6.500.800 8 2.800 14.800 2.800 15.300 4.500V12.300H.7z" fill="#eec04a" stroke="#b98e2a" stroke-width=".8"/>
<rect x=".7" y="4.300" width="14.600" height="8" rx="1" fill="url(#g23)" stroke="#c39a30" stroke-width=".8"/></svg>
        <div class="t" style="left:34.500px;top:50px;letter-spacing:-0.218px">Shared Documents</div>
        <svg style="left:13px;top:70px" width="16" height="16" viewBox="0 0 16 16"><defs><radialGradient id="g24" cx=".4" cy=".3" r=".75"><stop offset="0" stop-color="#6fd070"/><stop offset=".5" stop-color="#2a8f5a"/><stop offset="1" stop-color="#1a4fb0"/></radialGradient></defs>
<circle cx="5" cy="5" r="4.800" fill="url(#g24)"/>
<path d="M5.500 3.500 14.500 2.500 15 10.500 7 11.800z" fill="#4aa6ee" stroke="#9fc0e4" stroke-width="1.100"/>
<path d="M6.500 4.500 13.500 3.800 13.700 6.500 7 8z" fill="#9fd8fb" opacity=".8"/>
<path d="M9 11.500h3.500v1.800H9z" fill="#b9c4d8"/>
<ellipse cx="10.500" cy="13.800" rx="4.600" ry="1.700" fill="#ece7f0" stroke="#a7a2b8" stroke-width=".7"/></svg>
        <div class="t" style="left:34.500px;top:70px;letter-spacing:-0.215px">My Network Places</div>
      </div>
      <div class="ph" style="top:256px"><div class="t" style="letter-spacing:0.500px">Details</div><svg style="left:163px;top:4px" width="16" height="16" viewBox="0 0 16 16"><circle cx="8" cy="8" r="7.500" fill="#fff" stroke="#c9d2ea" stroke-width=".9"/>
<path d="M2.500 12.800A7.500 7.500 0 0 0 13.500 12.800" fill="none" stroke="#aab4d4" stroke-width=".9"/>
<path d="M4.500 4.600 8 8 11.500 4.600M4.500 8.600 8 12 11.500 8.600" fill="none" stroke="#11296b" stroke-width="1.700"/></svg></div>
    </div>
    <div id="files" class="a">
      <svg style="left:10px;top:13px" width="36" height="36" viewBox="0 0 36 36"><defs><linearGradient id="g25" x1=".9" y1="0" x2=".1" y2="1"><stop offset="0" stop-color="#fffbb8"/><stop offset=".45" stop-color="#fdf18c"/><stop offset="1" stop-color="#f9cf78"/></linearGradient>
<linearGradient id="g26" x1="0" y1="0" x2="0" y2="1"><stop offset="0" stop-color="#fdf3a0"/><stop offset="1" stop-color="#f2d468"/></linearGradient></defs>
<path d="M1 34.500 .5 6.500 2.600 1.200 13 .5 16.200 4 31.500 2.500 35.700 4.800 33.300 28.300 2.800 35.400z" fill="url(#g26)" stroke="#bb962a" stroke-width="1.200"/>
<path d="M2.800 35.400 3.600 11.600 12.800 9.300 16.200 6.900 34.500 4.600 33.300 28.300z" fill="url(#g25)" stroke="#c09a2c" stroke-width="1.300" stroke-linejoin="round"/>
<path d="M3.200 34.900 33.200 28" stroke="#a8842a" stroke-width="1.400" opacity=".75"/>
<path d="M34.300 6 33.600 28" stroke="#a8842a" stroke-width=".9" opacity=".6"/></svg><div class="t" style="left:57px;top:23px;letter-spacing:-0.400px">Demo</div>
      <svg style="left:228px;top:13px" width="36" height="36" viewBox="0 0 36 36"><defs><linearGradient id="g27" x1=".9" y1="0" x2=".1" y2="1"><stop offset="0" stop-color="#fffbb8"/><stop offset=".45" stop-color="#fdf18c"/><stop offset="1" stop-color="#f9cf78"/></linearGradient>
<linearGradient id="g28" x1="0" y1="0" x2="0" y2="1"><stop offset="0" stop-color="#fdf3a0"/><stop offset="1" stop-color="#f2d468"/></linearGradient></defs>
<path d="M1 34.500 .5 6.500 2.600 1.200 13 .5 16.200 4 31.500 2.500 35.700 4.800 33.300 28.300 2.800 35.400z" fill="url(#g28)" stroke="#bb962a" stroke-width="1.200"/>
<path d="M2.800 35.400 3.600 11.600 12.800 9.300 16.200 6.900 34.500 4.600 33.300 28.300z" fill="url(#g27)" stroke="#c09a2c" stroke-width="1.300" stroke-linejoin="round"/>
<path d="M3.200 34.900 33.200 28" stroke="#a8842a" stroke-width="1.400" opacity=".75"/>
<path d="M34.300 6 33.600 28" stroke="#a8842a" stroke-width=".9" opacity=".6"/></svg><div class="t" style="left:275px;top:23px;letter-spacing:-0.216px">Manual</div>
      <svg style="left:10px;top:69px" width="36" height="36" viewBox="0 0 36 36"><defs><linearGradient id="g29" x1=".9" y1="0" x2=".1" y2="1"><stop offset="0" stop-color="#fffbb8"/><stop offset=".45" stop-color="#fdf18c"/><stop offset="1" stop-color="#f9cf78"/></linearGradient>
<linearGradient id="g30" x1="0" y1="0" x2="0" y2="1"><stop offset="0" stop-color="#fdf3a0"/><stop offset="1" stop-color="#f2d468"/></linearGradient></defs>
<path d="M1 34.500 .5 6.500 2.600 1.200 13 .5 16.200 4 31.500 2.500 35.700 4.800 33.300 28.300 2.800 35.400z" fill="url(#g30)" stroke="#bb962a" stroke-width="1.200"/>
<path d="M2.800 35.400 3.600 11.600 12.800 9.300 16.200 6.900 34.500 4.600 33.300 28.300z" fill="url(#g29)" stroke="#c09a2c" stroke-width="1.300" stroke-linejoin="round"/>
<path d="M3.200 34.900 33.200 28" stroke="#a8842a" stroke-width="1.400" opacity=".75"/>
<path d="M34.300 6 33.600 28" stroke="#a8842a" stroke-width=".9" opacity=".6"/></svg><div class="t" style="left:57px;top:79px;letter-spacing:0.500px">PI</div>
      <svg style="left:228px;top:69px" width="36" height="36" viewBox="0 0 36 36"><defs><linearGradient id="g31" x1=".9" y1="0" x2=".1" y2="1"><stop offset="0" stop-color="#fffbb8"/><stop offset=".45" stop-color="#fdf18c"/><stop offset="1" stop-color="#f9cf78"/></linearGradient>
<linearGradient id="g32" x1="0" y1="0" x2="0" y2="1"><stop offset="0" stop-color="#fdf3a0"/><stop offset="1" stop-color="#f2d468"/></linearGradient></defs>
<path d="M1 34.500 .5 6.500 2.600 1.200 13 .5 16.200 4 31.500 2.500 35.700 4.800 33.300 28.300 2.800 35.400z" fill="url(#g32)" stroke="#bb962a" stroke-width="1.200"/>
<path d="M2.800 35.400 3.600 11.600 12.800 9.300 16.200 6.900 34.500 4.600 33.300 28.300z" fill="url(#g31)" stroke="#c09a2c" stroke-width="1.300" stroke-linejoin="round"/>
<path d="M3.200 34.900 33.200 28" stroke="#a8842a" stroke-width="1.400" opacity=".75"/>
<path d="M34.300 6 33.600 28" stroke="#a8842a" stroke-width=".9" opacity=".6"/></svg><div class="t" style="left:275px;top:79px;letter-spacing:-0.096px">Reader</div>
      <svg style="left:10px;top:125px" width="36" height="36" viewBox="0 0 36 36"><defs><linearGradient id="g33" x1=".9" y1="0" x2=".1" y2="1"><stop offset="0" stop-color="#fffbb8"/><stop offset=".45" stop-color="#fdf18c"/><stop offset="1" stop-color="#f9cf78"/></linearGradient>
<linearGradient id="g34" x1="0" y1="0" x2="0" y2="1"><stop offset="0" stop-color="#fdf3a0"/><stop offset="1" stop-color="#f2d468"/></linearGradient></defs>
<path d="M1 34.500 .5 6.500 2.600 1.200 13 .5 16.200 4 31.500 2.500 35.700 4.800 33.300 28.300 2.800 35.400z" fill="url(#g34)" stroke="#bb962a" stroke-width="1.200"/>
<path d="M2.800 35.400 3.600 11.600 12.800 9.300 16.200 6.900 34.500 4.600 33.300 28.300z" fill="url(#g33)" stroke="#c09a2c" stroke-width="1.300" stroke-linejoin="round"/>
<path d="M3.200 34.900 33.200 28" stroke="#a8842a" stroke-width="1.400" opacity=".75"/>
<path d="M34.300 6 33.600 28" stroke="#a8842a" stroke-width=".9" opacity=".6"/></svg><div class="t" style="left:57px;top:135px">screen</div>
      <svg style="left:228px;top:125px" width="36" height="36" viewBox="0 0 36 36"><defs><linearGradient id="g35" x1=".9" y1="0" x2=".1" y2="1"><stop offset="0" stop-color="#fffbb8"/><stop offset=".45" stop-color="#fdf18c"/><stop offset="1" stop-color="#f9cf78"/></linearGradient>
<linearGradient id="g36" x1="0" y1="0" x2="0" y2="1"><stop offset="0" stop-color="#fdf3a0"/><stop offset="1" stop-color="#f2d468"/></linearGradient></defs>
<path d="M1 34.500 .5 6.500 2.600 1.200 13 .5 16.200 4 31.500 2.500 35.700 4.800 33.300 28.300 2.800 35.400z" fill="url(#g36)" stroke="#bb962a" stroke-width="1.200"/>
<path d="M2.800 35.400 3.600 11.600 12.800 9.300 16.200 6.900 34.500 4.600 33.300 28.300z" fill="url(#g35)" stroke="#c09a2c" stroke-width="1.300" stroke-linejoin="round"/>
<path d="M3.200 34.900 33.200 28" stroke="#a8842a" stroke-width="1.400" opacity=".75"/>
<path d="M34.300 6 33.600 28" stroke="#a8842a" stroke-width=".9" opacity=".6"/></svg><div class="t" style="left:275px;top:135px;letter-spacing:0.500px">VI</div>
      <svg style="left:8px;top:174px" width="44" height="47" viewBox="0 0 44 47"><defs><linearGradient id="g37" x1="0" y1="0" x2=".3" y2="1"><stop offset="0" stop-color="#ffffff"/><stop offset=".6" stop-color="#f1fbfe"/><stop offset="1" stop-color="#cdeefa"/></linearGradient>
<radialGradient id="g38" cx=".45" cy=".4" r=".6"><stop offset="0" stop-color="#fbc444"/><stop offset=".65" stop-color="#eea026"/><stop offset="1" stop-color="#c47c16"/></radialGradient></defs>
<path d="M.8 3.800 32 1.600 31.300 41.500 2 46z" fill="url(#g37)" stroke="#7a7fd0" stroke-width="1.200"/>
<path d="M1.200 4 1.900 45.500" stroke="#5a5fc0" stroke-width="1.600"/>
<path d="M5 11.500 15 10.600M5 15.300 15 14.400M5 21.500 17 20.400M5 25.500 19 24.300M5 29.500 21 28M5 33.500 23 31.700M5 37.500 19 36" stroke="#86b0cc" stroke-width="1"/>
<ellipse cx="3.5" cy="3.40" rx="1.500" ry="2.600" fill="none" stroke="#a9a52e" stroke-width="1.300"/><circle cx="3.5" cy="5.60" r=".9" fill="#6a6ab0"/><ellipse cx="7.2" cy="3.13" rx="1.500" ry="2.600" fill="none" stroke="#a9a52e" stroke-width="1.300"/><circle cx="7.2" cy="5.33" r=".9" fill="#6a6ab0"/><ellipse cx="10.9" cy="2.86" rx="1.500" ry="2.600" fill="none" stroke="#a9a52e" stroke-width="1.300"/><circle cx="10.9" cy="5.06" r=".9" fill="#6a6ab0"/><ellipse cx="14.6" cy="2.59" rx="1.500" ry="2.600" fill="none" stroke="#a9a52e" stroke-width="1.300"/><circle cx="14.6" cy="4.79" r=".9" fill="#6a6ab0"/><ellipse cx="18.3" cy="2.32" rx="1.500" ry="2.600" fill="none" stroke="#a9a52e" stroke-width="1.300"/><circle cx="18.3" cy="4.52" r=".9" fill="#6a6ab0"/><ellipse cx="22.0" cy="2.05" rx="1.500" ry="2.600" fill="none" stroke="#a9a52e" stroke-width="1.300"/><circle cx="22.0" cy="4.25" r=".9" fill="#6a6ab0"/><ellipse cx="25.7" cy="1.78" rx="1.500" ry="2.600" fill="none" stroke="#a9a52e" stroke-width="1.300"/><circle cx="25.7" cy="3.98" r=".9" fill="#6a6ab0"/><ellipse cx="29.4" cy="1.51" rx="1.500" ry="2.600" fill="none" stroke="#a9a52e" stroke-width="1.300"/><circle cx="29.4" cy="3.71" r=".9" fill="#6a6ab0"/>
<path d="M42.2 23.4L41.6 25.7L37.5 26.4L36.2 27.8L36.4 31.3L33.7 32.3L30.5 30.1L28.3 30.1L25.2 32.4L22.5 31.4L22.6 27.9L21.2 26.6L17.1 25.9L16.4 23.6L19.7 21.5L20.2 19.8L18.2 16.7L20.0 14.9L24.1 15.7L26.0 14.9L27.7 11.7L30.6 11.7L32.4 14.8L34.3 15.6L38.4 14.7L40.2 16.5L38.3 19.6L38.8 21.3z" transform="translate(.8 1.200)" fill="#8a5a14" opacity=".55" stroke="#8a5a14" stroke-width="1.500" stroke-linejoin="round"/>
<path d="M42.2 23.4L41.6 25.7L37.5 26.4L36.2 27.8L36.4 31.3L33.7 32.3L30.5 30.1L28.3 30.1L25.2 32.4L22.5 31.4L22.6 27.9L21.2 26.6L17.1 25.9L16.4 23.6L19.7 21.5L20.2 19.8L18.2 16.7L20.0 14.9L24.1 15.7L26.0 14.9L27.7 11.7L30.6 11.7L32.4 14.8L34.3 15.6L38.4 14.7L40.2 16.5L38.3 19.6L38.8 21.3z" fill="url(#g38)" stroke="#d08c1e" stroke-width="1.600" stroke-linejoin="round"/>
<path d="M17 25l1.500 2.500" stroke="#5a3c10" stroke-width="2" opacity=".6"/>
<ellipse cx="29.300" cy="23" rx="3.300" ry="2.200" fill="#8d5f18" opacity=".7"/>
<path d="M27 10.500h4.600V22.500H27z" fill="#9aa4ae"/>
<path d="M27 10.500h1.800V22.500H27z" fill="#d5dbe0"/>
<ellipse cx="29.300" cy="10.500" rx="2.300" ry="1.100" fill="#4f6f9a"/></svg>
      <div class="t" style="left:57px;top:178px;letter-spacing:0.178px">Autorun</div><div class="t g" style="left:57px;top:191px;letter-spacing:0.047px">Setup Information</div><div class="t g" style="left:57px;top:204px;letter-spacing:-0.400px">1 KB</div>
      <svg style="left:226px;top:174px" width="44" height="47" viewBox="0 0 44 47"><defs><linearGradient id="g39" x1="0" y1="0" x2=".3" y2="1"><stop offset="0" stop-color="#ffffff"/><stop offset=".6" stop-color="#f1fbfe"/><stop offset="1" stop-color="#cdeefa"/></linearGradient>
<radialGradient id="g40" cx=".45" cy=".4" r=".6"><stop offset="0" stop-color="#fbc444"/><stop offset=".65" stop-color="#eea026"/><stop offset="1" stop-color="#c47c16"/></radialGradient></defs>
<path d="M.8 3.800 32 1.600 31.300 41.500 2 46z" fill="url(#g39)" stroke="#7a7fd0" stroke-width="1.200"/>
<path d="M1.200 4 1.900 45.500" stroke="#5a5fc0" stroke-width="1.600"/>
<path d="M5 11.500 15 10.600M5 15.300 15 14.400M5 21.500 17 20.400M5 25.500 19 24.300M5 29.500 21 28M5 33.500 23 31.700M5 37.500 19 36" stroke="#86b0cc" stroke-width="1"/>
<ellipse cx="3.5" cy="3.40" rx="1.500" ry="2.600" fill="none" stroke="#a9a52e" stroke-width="1.300"/><circle cx="3.5" cy="5.60" r=".9" fill="#6a6ab0"/><ellipse cx="7.2" cy="3.13" rx="1.500" ry="2.600" fill="none" stroke="#a9a52e" stroke-width="1.300"/><circle cx="7.2" cy="5.33" r=".9" fill="#6a6ab0"/><ellipse cx="10.9" cy="2.86" rx="1.500" ry="2.600" fill="none" stroke="#a9a52e" stroke-width="1.300"/><circle cx="10.9" cy="5.06" r=".9" fill="#6a6ab0"/><ellipse cx="14.6" cy="2.59" rx="1.500" ry="2.600" fill="none" stroke="#a9a52e" stroke-width="1.300"/><circle cx="14.6" cy="4.79" r=".9" fill="#6a6ab0"/><ellipse cx="18.3" cy="2.32" rx="1.500" ry="2.600" fill="none" stroke="#a9a52e" stroke-width="1.300"/><circle cx="18.3" cy="4.52" r=".9" fill="#6a6ab0"/><ellipse cx="22.0" cy="2.05" rx="1.500" ry="2.600" fill="none" stroke="#a9a52e" stroke-width="1.300"/><circle cx="22.0" cy="4.25" r=".9" fill="#6a6ab0"/><ellipse cx="25.7" cy="1.78" rx="1.500" ry="2.600" fill="none" stroke="#a9a52e" stroke-width="1.300"/><circle cx="25.7" cy="3.98" r=".9" fill="#6a6ab0"/><ellipse cx="29.4" cy="1.51" rx="1.500" ry="2.600" fill="none" stroke="#a9a52e" stroke-width="1.300"/><circle cx="29.4" cy="3.71" r=".9" fill="#6a6ab0"/>
<path d="M42.2 23.4L41.6 25.7L37.5 26.4L36.2 27.8L36.4 31.3L33.7 32.3L30.5 30.1L28.3 30.1L25.2 32.4L22.5 31.4L22.6 27.9L21.2 26.6L17.1 25.9L16.4 23.6L19.7 21.5L20.2 19.8L18.2 16.7L20.0 14.9L24.1 15.7L26.0 14.9L27.7 11.7L30.6 11.7L32.4 14.8L34.3 15.6L38.4 14.7L40.2 16.5L38.3 19.6L38.8 21.3z" transform="translate(.8 1.200)" fill="#8a5a14" opacity=".55" stroke="#8a5a14" stroke-width="1.500" stroke-linejoin="round"/>
<path d="M42.2 23.4L41.6 25.7L37.5 26.4L36.2 27.8L36.4 31.3L33.7 32.3L30.5 30.1L28.3 30.1L25.2 32.4L22.5 31.4L22.6 27.9L21.2 26.6L17.1 25.9L16.4 23.6L19.7 21.5L20.2 19.8L18.2 16.7L20.0 14.9L24.1 15.7L26.0 14.9L27.7 11.7L30.6 11.7L32.4 14.8L34.3 15.6L38.4 14.7L40.2 16.5L38.3 19.6L38.8 21.3z" fill="url(#g40)" stroke="#d08c1e" stroke-width="1.600" stroke-linejoin="round"/>
<path d="M17 25l1.500 2.500" stroke="#5a3c10" stroke-width="2" opacity=".6"/>
<ellipse cx="29.300" cy="23" rx="3.300" ry="2.200" fill="#8d5f18" opacity=".7"/>
<path d="M27 10.500h4.600V22.500H27z" fill="#9aa4ae"/>
<path d="M27 10.500h1.800V22.500H27z" fill="#d5dbe0"/>
<ellipse cx="29.300" cy="10.500" rx="2.300" ry="1.100" fill="#4f6f9a"/></svg>
      <div class="t" style="left:275px;top:178px;letter-spacing:-0.039px">Config</div><div class="t g" style="left:275px;top:191px">Configuration Settings</div><div class="t g" style="left:275px;top:204px;letter-spacing:-0.400px">1 KB</div>
      <div class="a" style="left:4px;top:228px;width:48px;height:50px;background:#f8f8f8"></div>
      <svg style="left:8px;top:232px" width="44" height="45" viewBox="0 0 44 45"><defs><linearGradient id="g41" x1="0" y1="0" x2="1" y2="1"><stop offset="0" stop-color="#ececec"/><stop offset=".45" stop-color="#d2d2d2"/><stop offset=".6" stop-color="#f4f4f4"/><stop offset="1" stop-color="#c8c8c8"/></linearGradient>
<linearGradient id="g42" x1="0" y1="0" x2="0" y2="1"><stop offset="0" stop-color="#e2e2e2"/><stop offset="1" stop-color="#c9c9c9"/></linearGradient></defs>
<circle cx="27" cy="16.500" r="15.800" fill="url(#g41)" stroke="#000" stroke-width="1.300"/>
<path d="M27 16.500 13.500 9.500A15.500 15.500 0 0 1 20 3z" fill="#7fd6b0" opacity=".75"/>
<path d="M27 16.500 20 3a15.500 15.500 0 0 1 4.500-1.500z" fill="#f0a898" opacity=".7"/>
<path d="M27 16.500 12 14a15.500 15.500 0 0 1 1.500-4.500z" fill="#9fc8ee" opacity=".7"/>
<path d="M27 16.500 40.500 23.500A15.500 15.500 0 0 1 34 30z" fill="#7fd6a8" opacity=".75"/>
<path d="M27 16.500 42 19a15.500 15.500 0 0 1-1.500 4.500z" fill="#9fd4ee" opacity=".7"/>
<circle cx="27" cy="16.500" r="5" fill="#9a9a9a"/>
<circle cx="27" cy="16.500" r="2.500" fill="#fff"/>
<rect x=".8" y="22.300" width="32.400" height="21.800" rx="3" fill="url(#g42)" stroke="#000" stroke-width="1.600"/>
<rect x="5" y="27.800" width="3" height="12.500" fill="#7c7c7c"/>
<rect x="12.300" y="25.300" width="7.400" height="2.600" rx="1.300" fill="#e8e8e8" stroke="#4a4a4a" stroke-width=".9"/>
<path d="M23.500 26h3.300v2.800" fill="none" stroke="#222" stroke-width="1"/>
<circle cx="23.500" cy="35" r="4.600" fill="#1b1b5c"/>
<circle cx="23.500" cy="35" r="1.700" fill="#e4e8ff"/></svg>
      <div class="t" style="left:57px;top:241px">Execute</div><div class="t g" style="left:57px;top:254px;letter-spacing:-0.186px">Execute MFC Application</div>
      <div class="a" style="left:222px;top:228px;width:48px;height:50px;background:#f8f8f8"></div>
      <svg style="left:226px;top:232px" width="44" height="45" viewBox="0 0 44 45"><defs><linearGradient id="g43" x1="0" y1="0" x2="1" y2="1"><stop offset="0" stop-color="#ececec"/><stop offset=".45" stop-color="#d2d2d2"/><stop offset=".6" stop-color="#f4f4f4"/><stop offset="1" stop-color="#c8c8c8"/></linearGradient>
<linearGradient id="g44" x1="0" y1="0" x2="0" y2="1"><stop offset="0" stop-color="#e2e2e2"/><stop offset="1" stop-color="#c9c9c9"/></linearGradient></defs>
<circle cx="27" cy="16.500" r="15.800" fill="url(#g43)" stroke="#000" stroke-width="1.300"/>
<path d="M27 16.500 13.500 9.500A15.500 15.500 0 0 1 20 3z" fill="#7fd6b0" opacity=".75"/>
<path d="M27 16.500 20 3a15.500 15.500 0 0 1 4.500-1.500z" fill="#f0a898" opacity=".7"/>
<path d="M27 16.500 12 14a15.500 15.500 0 0 1 1.500-4.500z" fill="#9fc8ee" opacity=".7"/>
<path d="M27 16.500 40.500 23.500A15.500 15.500 0 0 1 34 30z" fill="#7fd6a8" opacity=".75"/>
<path d="M27 16.500 42 19a15.500 15.500 0 0 1-1.500 4.500z" fill="#9fd4ee" opacity=".7"/>
<circle cx="27" cy="16.500" r="5" fill="#9a9a9a"/>
<circle cx="27" cy="16.500" r="2.500" fill="#fff"/>
<rect x=".8" y="22.300" width="32.400" height="21.800" rx="3" fill="url(#g44)" stroke="#000" stroke-width="1.600"/>
<rect x="5" y="27.800" width="3" height="12.500" fill="#7c7c7c"/>
<rect x="12.300" y="25.300" width="7.400" height="2.600" rx="1.300" fill="#e8e8e8" stroke="#4a4a4a" stroke-width=".9"/>
<path d="M23.500 26h3.300v2.800" fill="none" stroke="#222" stroke-width="1"/>
<circle cx="23.500" cy="35" r="4.600" fill="#1b1b5c"/>
<circle cx="23.500" cy="35" r="1.700" fill="#e4e8ff"/></svg>
      <div class="t" style="left:275px;top:241px;letter-spacing:0.062px">Setup</div><div class="t g" style="left:275px;top:254px;letter-spacing:-0.182px">Launcher</div>
    </div>
  </div>
</div>

</body>
</html>
